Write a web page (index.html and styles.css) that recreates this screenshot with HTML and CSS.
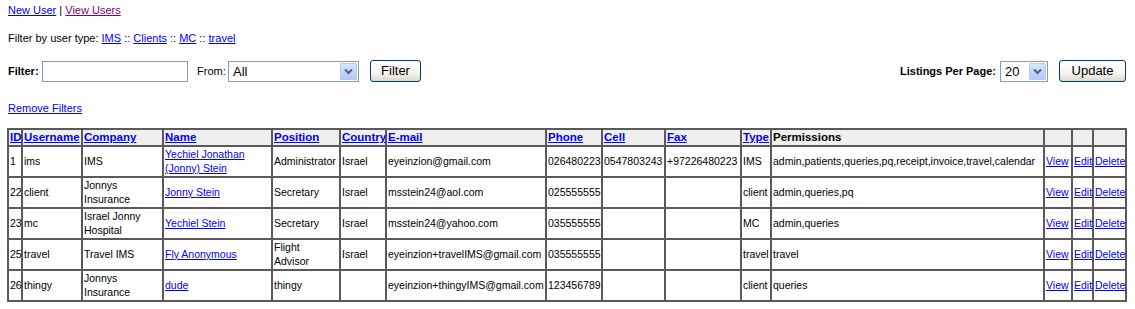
FILE: index.html
```html
<!DOCTYPE html>
<html>
<head>
<meta charset="utf-8">
<title>Users</title>
<link rel="stylesheet" href="styles.css">
</head>
<body>
<div class="page">
  <div class="nav"><a href="#">New User</a> | <a href="#" class="visited">View Users</a></div>
  <div class="types">Filter by user type: <a href="#">IMS</a> :: <a href="#">Clients</a> :: <a href="#">MC</a> :: <a href="#">travel</a></div>
  <div class="filterbar">
    <div class="group">
      <b class="lbl lbl-filter">Filter:</b>
      <input type="text" class="txt">
      <span class="from">From:</span>
      <div class="sel sel-from"><span class="sel-val">All</span><span class="sel-btn"><svg width="9" height="7" viewBox="0 0 9 7"><path d="M1 1.5 L4.5 5 L8 1.5" fill="none" stroke="#4d6185" stroke-width="2"/></svg></span></div>
      <button class="btn btn-filter">Filter</button>
    </div>
    <div class="group group-right">
      <b class="lbl">Listings Per Page:</b>
      <div class="sel sel-per"><span class="sel-val">20</span><span class="sel-btn"><svg width="9" height="7" viewBox="0 0 9 7"><path d="M1 1.5 L4.5 5 L8 1.5" fill="none" stroke="#4d6185" stroke-width="2"/></svg></span></div>
      <button class="btn btn-update">Update</button>
    </div>
  </div>
  <div class="remove"><a href="#">Remove Filters</a></div>
  <table class="users">
    <colgroup>
      <col style="width:14px"><col style="width:60px"><col style="width:81px"><col style="width:109px"><col style="width:68px"><col style="width:46px"><col style="width:160px"><col style="width:56px"><col style="width:63px"><col style="width:76px"><col style="width:30px"><col style="width:273px"><col style="width:28px"><col style="width:21px"><col style="width:33px">
    </colgroup>
    <thead>
      <tr>
        <th><a href="#">ID</a></th><th><a href="#">Username</a></th><th><a href="#">Company</a></th><th><a href="#">Name</a></th><th><a href="#">Position</a></th><th><a href="#">Country</a></th><th><a href="#">E-mail</a></th><th><a href="#">Phone</a></th><th><a href="#">Cell</a></th><th><a href="#">Fax</a></th><th><a href="#">Type</a></th><th>Permissions</th><th></th><th></th><th></th>
      </tr>
    </thead>
    <tbody>
      <tr>
        <td class="nw">1</td><td class="nw">ims</td><td>IMS</td><td><a href="#">Yechiel Jonathan (Jonny) Stein</a></td><td class="nw">Administrator</td><td class="nw">Israel</td><td class="nw">eyeinzion@gmail.com</td><td class="nw">026480223</td><td class="nw">0547803243</td><td class="nw">+97226480223</td><td class="nw">IMS</td><td class="nw">admin,patients,queries,pq,receipt,invoice,travel,calendar</td><td class="nw"><a href="#">View</a></td><td class="nw"><a href="#">Edit</a></td><td class="nw"><a href="#">Delete</a></td>
      </tr>
      <tr>
        <td class="nw">22</td><td class="nw">client</td><td>Jonnys Insurance</td><td><a href="#">Jonny Stein</a></td><td class="nw">Secretary</td><td class="nw">Israel</td><td class="nw">msstein24@aol.com</td><td class="nw">025555555</td><td></td><td></td><td class="nw">client</td><td class="nw">admin,queries,pq</td><td class="nw"><a href="#">View</a></td><td class="nw"><a href="#">Edit</a></td><td class="nw"><a href="#">Delete</a></td>
      </tr>
      <tr>
        <td class="nw">23</td><td class="nw">mc</td><td>Israel Jonny Hospital</td><td><a href="#">Yechiel Stein</a></td><td class="nw">Secretary</td><td class="nw">Israel</td><td class="nw">msstein24@yahoo.com</td><td class="nw">035555555</td><td></td><td></td><td class="nw">MC</td><td class="nw">admin,queries</td><td class="nw"><a href="#">View</a></td><td class="nw"><a href="#">Edit</a></td><td class="nw"><a href="#">Delete</a></td>
      </tr>
      <tr>
        <td class="nw">25</td><td class="nw">travel</td><td>Travel IMS</td><td><a href="#">Fly Anonymous</a></td><td>Flight<br>Advisor</td><td class="nw">Israel</td><td class="nw">eyeinzion+travelIMS@gmail.com</td><td class="nw">035555555</td><td></td><td></td><td class="nw">travel</td><td class="nw">travel</td><td class="nw"><a href="#">View</a></td><td class="nw"><a href="#">Edit</a></td><td class="nw"><a href="#">Delete</a></td>
      </tr>
      <tr>
        <td class="nw">26</td><td class="nw">thingy</td><td>Jonnys Insurance</td><td><a href="#">dude</a></td><td class="nw">thingy</td><td></td><td class="nw">eyeinzion+thingyIMS@gmail.com</td><td class="nw">123456789</td><td></td><td></td><td class="nw">client</td><td class="nw">queries</td><td class="nw"><a href="#">View</a></td><td class="nw"><a href="#">Edit</a></td><td class="nw"><a href="#">Delete</a></td>
      </tr>
    </tbody>
  </table>
</div>
</body>
</html>
```

FILE: styles.css
```css
html, body {
  margin: 0;
  padding: 0;
  background: #ffffff;
}
body {
  font-family: "Liberation Sans", Arial, sans-serif;
  font-size: 11px;
  color: #000000;
}
a {
  color: #0000ff;
  text-decoration: underline;
}
a.visited {
  color: #800080;
}
.page {
  padding: 3px 8px 0 8px;
}
.nav {
  line-height: 14px;
}
.types {
  margin-top: 14px;
  line-height: 14px;
}
.filterbar {
  margin-top: 15px;
  height: 22px;
  display: flex;
  justify-content: space-between;
  align-items: center;
}
.group {
  display: flex;
  align-items: center;
}
.group-right {
  margin-right: 1px;
}
.lbl {
  font-weight: bold;
  white-space: nowrap;
}
.lbl-filter {
  width: 30px;
  flex: none;
}
.txt {
  box-sizing: border-box;
  width: 146px;
  height: 21px;
  margin: 0 0 0 4px;
  padding: 0 2px;
  border: 1px solid #7f9db9;
  background: #fff;
  font-family: inherit;
  font-size: 13px;
  outline: none;
}
.from {
  margin-left: 9px;
  width: 27px;
  white-space: nowrap;
}
.sel {
  box-sizing: border-box;
  height: 21px;
  margin-left: 4px;
  border: 1px solid #7f9db9;
  background: #fff;
  display: flex;
  align-items: center;
  justify-content: space-between;
  padding: 1px;
}
.sel-from {
  width: 131px;
}
.sel-per {
  width: 48px;
}
.sel-val {
  font-size: 13px;
  padding-left: 3px;
  line-height: 17px;
}
.sel-btn {
  box-sizing: border-box;
  width: 17px;
  height: 17px;
  border: 1px solid #b9c9ef;
  border-radius: 1px;
  background: linear-gradient(to bottom, #dce6fd 0%, #c3d3fd 50%, #b5c8f7 100%);
  display: flex;
  align-items: center;
  justify-content: center;
}
.sel-btn svg {
  display: block;
}
.btn {
  box-sizing: border-box;
  height: 22px;
  margin: 0 0 0 11px;
  padding: 0;
  border: 1px solid #003c74;
  border-radius: 3px;
  background: linear-gradient(to bottom, #ffffff 0%, #f5f4ef 60%, #dcd9cc 100%);
  font-family: inherit;
  font-size: 13px;
  color: #000;
  line-height: 18px;
}
.btn-filter {
  width: 51px;
}
.btn-update {
  width: 67px;
}
.remove {
  margin-top: 19px;
  line-height: 14px;
}
.users {
  margin-top: 13px;
  margin-left: -1px;
  width: 1120px;
  table-layout: fixed;
  border-collapse: separate;
  border-spacing: 0;
  border: 1px solid #5a5a5a;
  font-size: 10.5px;
}
.users th,
.users td {
  border: 1px solid #5a5a5a;
  padding: 1px;
  text-align: left;
  vertical-align: middle;
  overflow: visible;
}
.users td {
  line-height: 13.5px;
  height: 27px;
}
.users th {
  background: #efefef;
  font-weight: bold;
  font-size: 11.5px;
  line-height: 13px;
  white-space: nowrap;
}
.users .nw {
  white-space: nowrap;
}
```
